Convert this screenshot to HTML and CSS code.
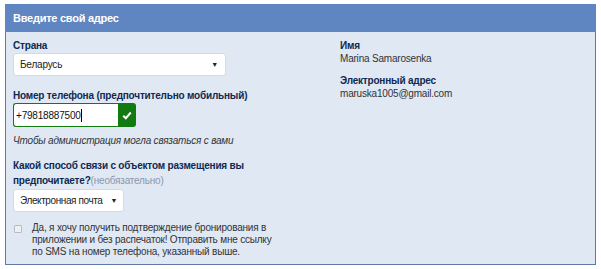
FILE: index.html
```html
<!DOCTYPE html>
<html lang="ru">
<head>
<meta charset="utf-8">
<link rel="stylesheet" href="styles.css">
</head>
<body>
<div class="panel">
  <div class="panel-head">Введите свой адрес</div>
  <div class="panel-body">
    <div class="col-left">
      <div class="field">
        <div class="label">Страна</div>
        <div class="select wide"><span>Беларусь</span><span class="arrow">▼</span></div>
      </div>
      <div class="field">
        <div class="label">Номер телефона (предпочтительно мобильный)</div>
        <div class="phone">
          <div class="phone-input">+79818887500<span class="caret"></span></div>
          <div class="phone-ok"><svg width="10" height="9" viewBox="0 0 10 9"><path d="M1.2 4.8 L3.8 7.2 L8.8 1.5" fill="none" stroke="#fff" stroke-width="2"/></svg></div>
        </div>
        <div class="hint">Чтобы администрация могла связаться с вами</div>
      </div>
      <div class="field">
        <div class="label label-wrap">Какой способ связи с объектом размещения вы предпочитаете?<span class="opt">(необязательно)</span></div>
        <div class="select narrow"><span class="sel-text">Электронная почта</span><span class="arrow">▼</span></div>
      </div>
      <label class="check">
        <span class="box"></span>
        <span class="check-text">Да, я хочу получить подтверждение бронирования в приложении и без распечаток! Отправить мне ссылку по SMS на номер телефона, указанный выше.</span>
      </label>
    </div>
    <div class="col-right">
      <div class="info">
        <div class="label">Имя</div>
        <div class="value">Marina Samarosenka</div>
      </div>
      <div class="info">
        <div class="label">Электронный адрес</div>
        <div class="value">maruska1005@gmail.com</div>
      </div>
    </div>
  </div>
</div>
</body>
</html>
```

FILE: styles.css
```css
* { box-sizing: border-box; }
body {
  margin: 0;
  background: #fff;
  font-family: "Liberation Sans", Arial, sans-serif;
  font-size: 10px;
  letter-spacing: -0.2px;
  color: #333;
}
.panel {
  margin: 4px 0 0 5px;
  width: 591px;
  height: 261px;
  border: 1px solid #5d7aa5;
  background: #dfe8f3;
}
.panel-head {
  height: 28px;
  margin: -1px -1px 0 -1px;
  background: #5f86c0;
  color: #fff;
  font-weight: bold;
  font-size: 11px;
  letter-spacing: -0.25px;
  line-height: 28px;
  padding-left: 8px;
}
.panel-body {
  display: flex;
  padding: 7px 0 0 7px;
}
.col-left {
  width: 327px;
}
.label {
  color: #0e2a52;
  font-weight: bold;
  line-height: 13px;
}
.label-wrap {
  width: 245px;
  line-height: 15px;
}
.opt {
  font-weight: normal;
  color: #8a98ab;
}
.select {
  margin-top: 1px;
  height: 23px;
  background: #fff;
  border-radius: 3px;
  border: 1px solid #d3dbe6;
  display: flex;
  align-items: center;
  justify-content: space-between;
  padding: 0 7px 0 6px;
  color: #222;
  white-space: nowrap;
}
.select.wide { width: 213px; }
.select.narrow {
  display: inline-flex;
  justify-content: flex-start;
  gap: 8px;
  margin-top: 1px;
  padding: 0 6px 0 6px;
}
.sel-text { letter-spacing: -0.4px; }
.arrow { font-size: 7px; color: #222; }
.field + .field { margin-top: 13px; }
.phone {
  margin-top: 1px;
  display: flex;
  width: 123px;
  height: 24px;
}
.phone-input {
  flex: 1;
  background: #fff;
  border: 1px solid #117a11;
  border-right: none;
  border-radius: 3px 0 0 3px;
  padding: 0 2px;
  display: flex;
  align-items: center;
  color: #111;
}
.caret {
  display: inline-block;
  width: 1px;
  height: 13px;
  background: #000;
}
.phone-ok {
  width: 18px;
  background: #117a11;
  border-radius: 0 3px 3px 0;
  display: flex;
  align-items: center;
  justify-content: center;
}
.hint {
  margin-top: 7px;
  font-style: italic;
  color: #333;
  line-height: 13px;
}
.field:nth-child(3) { margin-top: 11px; }
.check {
  display: flex;
  gap: 10px;
  margin-top: 10px;
  padding-left: 1px;
}
.box {
  width: 8px;
  height: 8px;
  border: 1px solid #b8bcc2;
  background: #eef0f2;
  border-radius: 1px;
  margin-top: 3px;
  flex: none;
}
.check-text {
  width: 242px;
  line-height: 12px;
  color: #333;
}
.info + .info { margin-top: 9px; }
.value { line-height: 13px; color: #333; }
```
